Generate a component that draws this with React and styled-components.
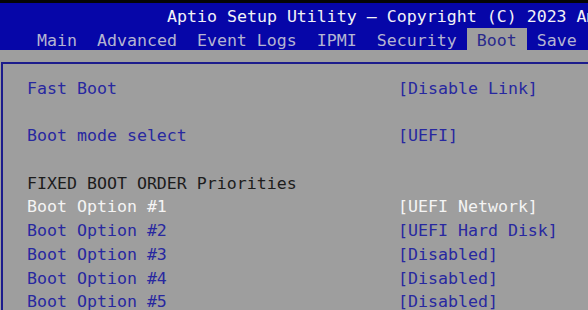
import React from 'react'
import styled, { createGlobalStyle } from 'styled-components'

const GlobalStyle = createGlobalStyle`
  html, body {
    margin: 0;
    padding: 0;
    background: #9e9e9e;
    overflow: hidden;
  }
`

const Screen = styled.div`
  width: 588px;
  height: 310px;
  overflow: hidden;
  background: #9e9e9e;
  font-family: "DejaVu Sans Mono", "Liberation Mono", monospace;
  font-size: 16.6px;
  white-space: pre;
  display: flex;
  flex-direction: column;
`

const TopStrip = styled.div`
  height: 3px;
  background: #050505;
  flex-shrink: 0;
`

const Header = styled.div`
  background: #0606a8;
  height: 47px;
  flex-shrink: 0;
  display: flex;
  flex-direction: column;
`

const Title = styled.div`
  height: 25px;
  line-height: 28px;
  padding-left: 167px;
  color: #f2f2f6;
  overflow: hidden;
`

const Tabs = styled.div`
  display: flex;
  padding-left: 27px;
  height: 22px;
  margin-top: auto;
`

const Tab = styled.div`
  padding: 0 10px;
  line-height: 25px;
  height: 22px;
  color: ${p => (p.active ? '#2a2a8c' : '#b4b4d2')};
  background: ${p => (p.active ? '#9e9e9e' : 'transparent')};
`

const Body = styled.div`
  flex: 1;
  padding-top: 12px;
  padding-left: 1px;
`

const Panel = styled.div`
  border-top: 2px solid #1c1c8c;
  border-left: 2px solid #1c1c8c;
  height: 100%;
  padding: 13px 0 0 24px;
`

const Row = styled.div`
  display: flex;
  height: 23.7px;
  line-height: 23.7px;
  color: ${p => p.color};
`

const Label = styled.span`
  width: 371px;
  flex-shrink: 0;
`

const Value = styled.span``

const tabs = ['Main', 'Advanced', 'Event Logs', 'IPMI', 'Security', 'Boot', 'Save']

const rows = [
  { label: 'Fast Boot', value: '[Disable Link]', color: '#2828a0' },
  { label: '', value: '' },
  { label: 'Boot mode select', value: '[UEFI]', color: '#2828a0' },
  { label: '', value: '' },
  { label: 'FIXED BOOT ORDER Priorities', value: '', color: '#1c1c1c' },
  { label: 'Boot Option #1', value: '[UEFI Network]', color: '#f4f4f4' },
  { label: 'Boot Option #2', value: '[UEFI Hard Disk]', color: '#2828a0' },
  { label: 'Boot Option #3', value: '[Disabled]', color: '#2828a0' },
  { label: 'Boot Option #4', value: '[Disabled]', color: '#2828a0' },
  { label: 'Boot Option #5', value: '[Disabled]', color: '#2828a0' },
]

export default function App() {
  return (
    <Screen>
      <GlobalStyle />
      <TopStrip />
      <Header>
        <Title>Aptio Setup Utility – Copyright (C) 2023 American Megatrends International, LLC.</Title>
        <Tabs>
          {tabs.map(t => (
            <Tab key={t} active={t === 'Boot'}>{t}</Tab>
          ))}
        </Tabs>
      </Header>
      <Body>
        <Panel>
          {rows.map((r, i) => (
            <Row key={i} color={r.color}>
              <Label>{r.label}</Label>
              <Value>{r.value}</Value>
            </Row>
          ))}
        </Panel>
      </Body>
    </Screen>
  )
}
